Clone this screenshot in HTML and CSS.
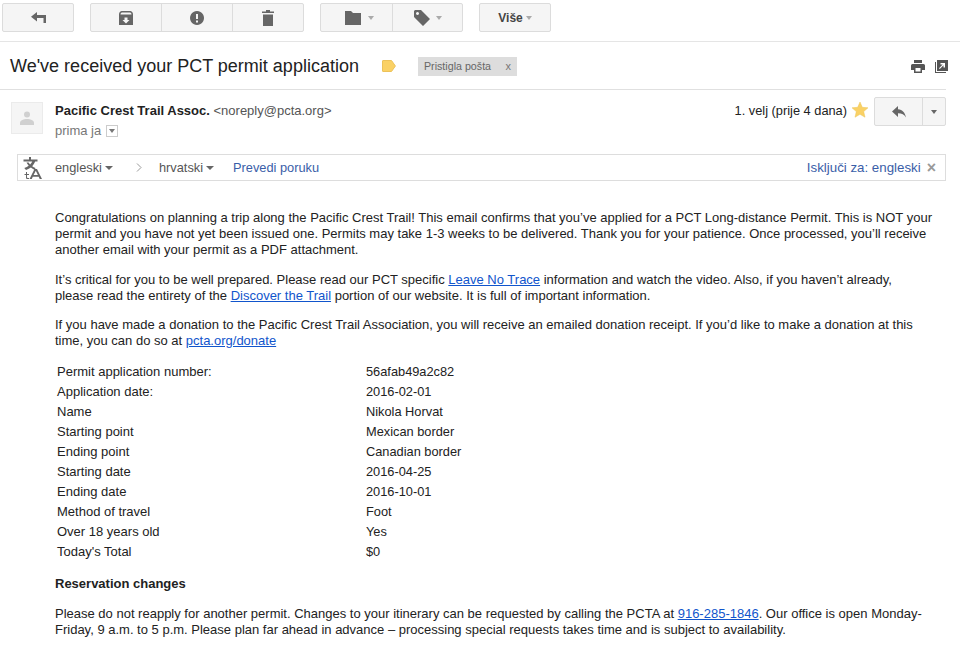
FILE: index.html
```html
<!DOCTYPE html>
<html>
<head>
	<meta name="viewport" content="width=device-width, initial-scale=1">
	<link rel="stylesheet" href="styles.css">
	<title>We've received your PCT permit application</title>
</head>
<body>
	<div class="toolbar">
		<div class="btn_group back">
			<div class="btn"><svg width="15" height="11" viewBox="0 0 15 11"><path d="M6 0v3h9v8h-2.500V6H6v3.500L0 4.750z" fill="#666"/></svg></div>
		</div>
		<div class="btn_group actions">
			<div class="btn"><svg width="14" height="14" viewBox="0 0 14 14"><path fill-rule="evenodd" d="M2.500 0h9Q14 .500 14 3.500V14H0V3.500Q0 .500 2.500 0zM1.500 3.500h11Q12.500 1.500 11 1.500H3Q1.500 1.500 1.500 3.500zM5.500 6.500v2.500H3.500L7 12.500 10.500 9H8.500V6.500z" fill="#666"/></svg></div>
			<div class="btn"><svg width="14" height="14" viewBox="0 0 14 14"><path fill-rule="evenodd" d="M7 0a7 7 0 1 0 .01 0zM6 3v5h2V3zM6 9.500v2h2v-2z" fill="#666"/></svg></div>
			<div class="btn"><svg width="12" height="16" viewBox="0 0 12 16"><path d="M4 0h4v1.500h4V3H0V1.500h4zM1 4.500h10V16H1z" fill="#666"/></svg></div>
		</div>
		<div class="btn_group moves">
			<div class="btn folder_btn"><svg width="16" height="14" viewBox="0 0 16 14"><path d="M0 0h6l2 2h8v12H0z" fill="#666"/></svg><i class="caret"></i></div>
			<div class="btn"><svg width="16" height="16" viewBox="0 0 16 16"><path fill-rule="evenodd" d="M1 0h6l9 9-7 7-9-9V1zM3.500 2a1.500 1.500 0 1 0 .01 0z" fill="#666"/></svg><i class="caret"></i></div>
		</div>
		<div class="btn_group more">
			<div class="btn"><b>Više</b><i class="caret"></i></div>
		</div>
	</div>

	<div class="subject_bar">
		<h1>We've received your PCT permit application</h1>
		<svg class="label_icon" width="14" height="12" viewBox="0 0 14 12"><path d="M1 .500h8.500L13.400 6l-3.900 5.500H1a.500.500 0 0 1-.500-.500V1A.500.500 0 0 1 1 .500z" fill="#fad165" stroke="#ecc25a"/></svg>
		<div class="chip"><span>Pristigla pošta</span><span class="chip_x">x</span></div>
		<div class="subject_icons">
			<svg width="14" height="13" viewBox="0 0 14 13"><path fill-rule="evenodd" d="M3 0h8v3H3zM1.500 4h11A1.500 1.500 0 0 1 14 5.500V10h-3v3H3v-3H0V5.500A1.500 1.500 0 0 1 1.500 4zM4.500 8v3.500h5V8z" fill="#555"/></svg>
			<svg width="13" height="13" viewBox="0 0 13 13"><path fill-rule="evenodd" d="M2 0h11v11H2zM0 2h1v10h10v1H0zM5.500 3v1.500h2.200L4 8.200 4.800 9l3.700-3.700V7.500H10V3z" fill="#555"/></svg>
		</div>
	</div>

	<div class="sender_row">
		<div class="avatar"><svg width="14" height="14" viewBox="0 0 14 14"><circle cx="7" cy="3.500" r="3" fill="#d0d0d0"/><path d="M0 14v-2c0-3 4-4 7-4s7 1 7 4v2z" fill="#d0d0d0"/></svg></div>
		<div class="sender_info">
			<div class="sender_line"><b>Pacific Crest Trail Assoc.</b> <span class="addr">&lt;noreply@pcta.org&gt;</span></div>
			<div class="to_line">prima ja <span class="to_toggle"><i class="caret tiny"></i></span></div>
		</div>
		<div class="sender_right">
			<span class="date">1. velj (prije 4 dana)</span>
			<svg class="star" width="16" height="16" viewBox="0 0 16 16"><path d="M8 0l2.300 5.300 5.700.5-4.300 3.800 1.300 5.600L8 12.300l-5 2.900 1.300-5.600L0 5.800l5.700-.5z" fill="#fad165" stroke="#eac65c" stroke-width=".5"/></svg>
			<div class="reply_btn">
				<div class="reply_main"><svg width="14" height="12" viewBox="0 0 14 12"><path d="M6 0v3.200c4.500.4 7 3.300 8 8.300-1.800-3-4-4.300-8-4.300V11L0 5.500z" fill="#666"/></svg></div>
				<div class="reply_more"><i class="caret dark"></i></div>
			</div>
		</div>
	</div>

	<div class="translate_bar">
		<svg class="translate_icon" width="20" height="22" viewBox="0 0 20 22">
			<path d="M7 0h2v2.500h6.500v2h-2.300c-.8 1.900-1.800 3.400-3 4.700.9.700 2 1.400 3.300 1.900l-.8 1.800c-1.500-.7-2.700-1.400-3.800-2.300-1.300 1-2.900 1.800-4.900 2.500L2.300 11c1.800-.6 3.300-1.300 4.400-2.200C5.700 7.700 5 6.500 4.500 5.500h2.100c.4.800.9 1.500 1.500 2.100 1-1 1.700-2 2.200-3.100H1.500v-2H7z" fill="#666"/>
			<path d="M4 15v2H2.500v1H4v2.500c0 1 .6 1.500 1.500 1.500H7v-1H5.800c-.5 0-.8-.2-.8-.7V18h2v-1H5v-2zM12.500 12h2.500l5 10h-2.300l-1-2.300h-5.900l-1 2.300H7.500zm-.9 6h4.300l-2.100-4.300z" fill="#666"/>
		</svg>
		<span class="lang">engleski<i class="caret dark small"></i></span>
		<svg class="chev" width="6" height="9" viewBox="0 0 6 9"><path d="M1 .500 5 4.500 1 8.500" fill="none" stroke="#999"/></svg>
		<span class="lang">hrvatski<i class="caret dark small"></i></span>
		<a class="tr_link">Prevedi poruku</a>
		<a class="tr_link tr_off">Isključi za: engleski</a>
		<span class="tr_close">×</span>
	</div>

	<div class="mail_body">
		<p class="first">Congratulations on planning a trip along the Pacific Crest Trail! This email confirms that you’ve applied for a PCT Long-distance Permit. This is NOT your<br>permit and you have not yet been issued one. Permits may take 1-3 weeks to be delivered. Thank you for your patience. Once processed, you’ll receive<br>another email with your permit as a PDF attachment.</p>
		<p class="tight">It’s critical for you to be well prepared. Please read our PCT specific <a>Leave No Trace</a> information and watch the video. Also, if you haven’t already,<br>please read the entirety of the <a>Discover the Trail</a> portion of our website. It is full of important information.</p>
		<p class="before_table">If you have made a donation to the Pacific Crest Trail Association, you will receive an emailed donation receipt. If you’d like to make a donation at this<br>time, you can do so at <a>pcta.org/donate</a></p>
		<table class="permit">
			<tr><td>Permit application number:</td><td>56afab49a2c82</td></tr>
			<tr><td>Application date:</td><td>2016-02-01</td></tr>
			<tr><td>Name</td><td>Nikola Horvat</td></tr>
			<tr><td>Starting point</td><td>Mexican border</td></tr>
			<tr><td>Ending point</td><td>Canadian border</td></tr>
			<tr><td>Starting date</td><td>2016-04-25</td></tr>
			<tr><td>Ending date</td><td>2016-10-01</td></tr>
			<tr><td>Method of travel</td><td>Foot</td></tr>
			<tr><td>Over 18 years old</td><td>Yes</td></tr>
			<tr><td>Today's Total</td><td>$0</td></tr>
		</table>
		<h4>Reservation changes</h4>
		<p>Please do not reapply for another permit. Changes to your itinerary can be requested by calling the PCTA at <a>916-285-1846</a>. Our office is open Monday-<br>Friday, 9 a.m. to 5 p.m. Please plan far ahead in advance – processing special requests takes time and is subject to availability.</p>
	</div>
</body>
</html>
```

FILE: styles.css
```css
html, body {
	height: 654px;
	overflow: hidden;
}

body {
	margin: 0;
	background: #fff;
	color: #222;
	font-family: "Liberation Sans", Arial, sans-serif;
	font-size: 12.800px;
}

.toolbar {
	display: flex;
	height: 38px;
	padding: 3px 0 0 2px;
	border-bottom: 1px solid #e5e5e5;
}

.btn_group {
	display: flex;
	height: 29px;
	margin-right: 16px;
	background: #f5f5f5;
	border: 1px solid #dcdcdc;
	border-radius: 2px;
	box-sizing: border-box;
}

.btn {
	flex: 1;
	display: flex;
	align-items: center;
	justify-content: center;
	gap: 5px;
	border-left: 1px solid #dcdcdc;
}

.btn:first-child {
	border-left: 0;
}

.back { width: 72px; }
.actions { width: 214px; }
.moves { width: 143px; }
.more { width: 72px; }

.moves .btn {
	flex: 0 0 50%;
	box-sizing: border-box;
	gap: 6px;
	padding-left: 2px;
}

.moves .folder_btn {
	gap: 7px;
	padding-left: 6px;
}

.more b {
	font-size: 12px;
	color: #444;
}

.more .btn {
	gap: 3px;
}

.caret {
	display: inline-block;
	border-top: 4px solid #aaa;
	border-left: 3.500px solid transparent;
	border-right: 3.500px solid transparent;
}

.caret.dark {
	border-top-color: #666;
}

.caret.small {
	margin-left: 3px;
	vertical-align: 2px;
	border-left-width: 4px;
	border-right-width: 4px;
}

.caret.tiny {
	display: block;
	width: 0;
	margin: 3px auto 0;
	border-top: 4px solid #777;
	border-left-width: 3px;
	border-right-width: 3px;
}

.subject_bar {
	display: flex;
	align-items: center;
	height: 48px;
	margin-right: 14px;
	padding: 1px 0 0 10px;
	box-sizing: border-box;
	border-bottom: 1px solid #e0e0e0;
}

h1 {
	margin: 0 23px 0 0;
	font-size: 18px;
	font-weight: normal;
}

.label_icon {
	margin-right: 22px;
}

.chip {
	display: flex;
	justify-content: space-between;
	width: 99px;
	padding: 0 6px;
	box-sizing: border-box;
	background: #ddd;
	color: #666;
	font-size: 10.700px;
	line-height: 19px;
}

.chip_x {
	font-size: 11px;
	color: #777;
}

.subject_icons {
	display: flex;
	gap: 10px;
	margin-left: auto;
	margin-right: -2px;
}

.sender_row {
	display: flex;
	padding: 12px 14px 0 11px;
	height: 64px;
	box-sizing: border-box;
}

.avatar {
	display: flex;
	align-items: center;
	justify-content: center;
	width: 32px;
	height: 32px;
	margin-right: 12px;
	background: #f5f5f5;
	border: 1px solid #ebebeb;
	box-sizing: border-box;
}

.sender_line {
	margin-top: 1px;
	font-size: 13px;
	line-height: 16px;
}

.addr {
	color: #555;
}

.to_line {
	margin-top: 4px;
	color: #777;
	font-size: 13px;
	line-height: 16px;
}

.to_toggle {
	display: inline-block;
	width: 12px;
	height: 12px;
	margin-left: 1px;
	vertical-align: -2px;
	border: 1px solid #ccc;
	box-sizing: border-box;
}

.sender_right {
	display: flex;
	align-items: flex-start;
	margin-left: auto;
	margin-top: -5px;
}

.date {
	margin-top: 6px;
}

.star {
	margin: 5px 6px 0 5px;
}

.reply_btn {
	display: flex;
	width: 72px;
	height: 29px;
	background: #f5f5f5;
	border: 1px solid #dcdcdc;
	border-radius: 2px;
	box-sizing: border-box;
}

.reply_main {
	flex: 1;
	display: flex;
	align-items: center;
	justify-content: center;
}

.reply_more {
	display: flex;
	align-items: center;
	justify-content: center;
	width: 22px;
	border-left: 1px solid #dcdcdc;
}

.translate_bar {
	display: flex;
	align-items: center;
	height: 27px;
	margin: 0 14px 0 17px;
	padding-left: 4px;
	box-sizing: border-box;
	border: 1px solid #ddd;
	color: #555;
}

.translate_icon {
	margin-right: 13px;
}

.lang {
	white-space: nowrap;
}

.chev {
	margin: 0 17px 0 23px;
}

.tr_link {
	margin-left: 19px;
	color: #3a5ea8;
}

.tr_off {
	margin-left: auto;
	font-size: 13.300px;
}

.tr_close {
	margin: 0 9px 0 6px;
	font-size: 16px;
	font-weight: bold;
	line-height: 14px;
	color: #999;
}

.mail_body {
	margin: 29px 0 0 55px;
	font-size: 13px;
	line-height: 16px;
	white-space: nowrap;
}

.mail_body p {
	margin: 0 0 15px;
}

.mail_body p.first {
	margin-bottom: 14px;
}

.mail_body p.tight {
	margin-bottom: 13px;
}

.mail_body p.before_table {
	margin-bottom: 13px;
}

.mail_body a {
	color: #15c;
	text-decoration: underline;
}

.permit {
	border-collapse: collapse;
	margin-left: 2px;
}

.permit td {
	height: 20px;
	padding: 0;
	line-height: 16px;
}

.permit td:first-child {
	width: 309px;
}

.permit td:last-child {
	font-size: 12.800px;
}

h4 {
	margin: 14px 0;
	font-size: 13px;
	line-height: 16px;
}
```
